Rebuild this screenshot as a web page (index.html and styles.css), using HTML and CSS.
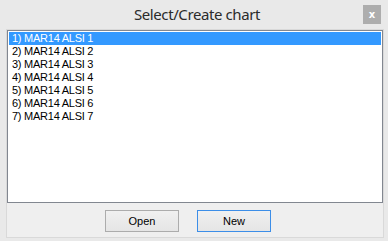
FILE: index.html
```html
<!DOCTYPE html>
<html>
<head>
<meta charset="utf-8">
<link rel="stylesheet" href="styles.css">
</head>
<body>
<div class="window">
  <div class="titlebar">
    <div></div>
    <div class="title">Select/Create chart</div>
    <div class="close">x</div>
  </div>
  <div class="panel">
    <ul class="list">
      <li class="item selected">1) MAR14 ALSI 1</li>
      <li class="item">2) MAR14 ALSI 2</li>
      <li class="item">3) MAR14 ALSI 3</li>
      <li class="item">4) MAR14 ALSI 4</li>
      <li class="item">5) MAR14 ALSI 5</li>
      <li class="item">6) MAR14 ALSI 6</li>
      <li class="item">7) MAR14 ALSI 7</li>
    </ul>
    <div class="buttons">
      <button class="btn">Open</button>
      <button class="btn default">New</button>
    </div>
  </div>
</div>
</body>
</html>
```
FILE: styles.css
```css
* { box-sizing: border-box; }
html, body { margin: 0; padding: 0; }
body {
  width: 388px;
  height: 241px;
  background: #e9e9e9;
  font-family: "Liberation Sans", Arial, sans-serif;
  overflow: hidden;
}
.window {
  display: flex;
  flex-direction: column;
  height: 241px;
}
.titlebar {
  height: 29px;
  display: grid;
  grid-template-columns: 1fr auto 1fr;
  align-items: start;
}
.title {
  font-family: "Noto Sans", "Open Sans", sans-serif;
  font-size: 15px;
  letter-spacing: -0.4px;
  color: #2b2b2b;
  padding-top: 5px;
  padding-left: 6px;
  line-height: 18px;
}
.close {
  justify-self: end;
  margin: 5px 7px 0 0;
  width: 18px;
  height: 19px;
  background: #adadad;
  color: #ffffff;
  font-family: "DejaVu Sans", sans-serif;
  font-weight: bold;
  font-size: 10px;
  display: flex;
  align-items: center;
  justify-content: center;
}
.panel {
  margin: 0 4px 0 6px;
  border: 1px solid #d9d9d9;
  background: #efefef;
  height: 209px;
  display: flex;
  flex-direction: column;
}
.list {
  list-style: none;
  margin: 0;
  padding: 1px 1px;
  height: 173px;
  background: #ffffff;
  border: 1px solid #828790;
}
.item {
  font-size: 11px;
  letter-spacing: -0.25px;
  line-height: 13px;
  height: 13px;
  padding-left: 3px;
  color: #000000;
  white-space: nowrap;
}
.item.selected {
  background: #3399ff;
  color: #ffffff;
}
.buttons {
  display: flex;
  gap: 18px;
  padding: 7px 0 0 98px;
}
.btn {
  width: 74px;
  height: 22px;
  border: 1px solid #acacac;
  background: linear-gradient(#f0f0f0, #e5e5e5);
  font-family: "Liberation Sans", Arial, sans-serif;
  font-size: 11px;
  color: #000;
  padding: 0;
}
.btn.default {
  border-color: #3c8ee8;
}
```
